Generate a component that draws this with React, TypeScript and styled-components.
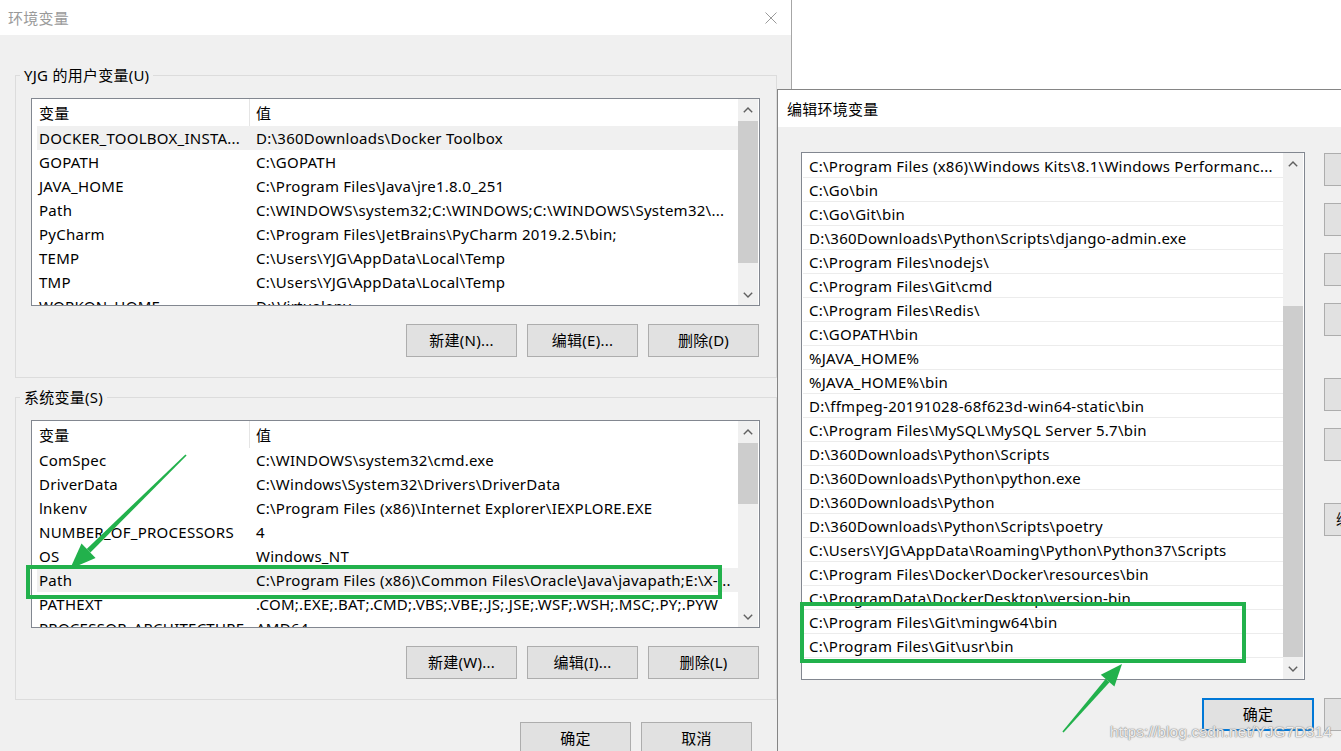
import React from 'react';
import styled, { createGlobalStyle } from 'styled-components';

const GlobalStyle = createGlobalStyle`
  html, body { margin: 0; padding: 0; background: #ffffff; }
  body { font-family: "Noto Sans", "Noto Sans CJK SC", sans-serif; }
  * { box-sizing: border-box; }
`;

const FONT = `"Noto Sans", "Noto Sans CJK SC", sans-serif`;

const Screen = styled.div`
  position: relative;
  width: 1341px;
  height: 751px;
  overflow: hidden;
  background: #ffffff;
  font-family: ${FONT};
  font-size: 15px;
  letter-spacing: 0.25px;
  color: #000;
`;

const Window = styled.section<{ $left: number; $top: number; $width: number; $height: number; $framed?: boolean }>`
  position: absolute;
  left: ${p => p.$left}px;
  top: ${p => p.$top}px;
  width: ${p => p.$width}px;
  height: ${p => p.$height}px;
  display: flex;
  flex-direction: column;
  background: #f0f0f0;
  ${p => (p.$framed ? 'border-left: 1px solid #858585; border-top: 1px solid #858585;' : 'border-right: 1px solid #a6a6a6;')}
`;

const TitleBar = styled.header<{ $height: number; $pad: number; $inactive?: boolean }>`
  height: ${p => p.$height}px;
  flex: none;
  background: #ffffff;
  display: flex;
  align-items: center;
  justify-content: space-between;
  padding: 0 14px 0 ${p => p.$pad}px;
  color: ${p => (p.$inactive ? '#9a9a9a' : '#000')};
  font-size: 15px;
`;

const CloseIcon = () => (
  <svg width="12" height="12" viewBox="0 0 12 12">
    <path d="M0.5 0.5 L11.5 11.5 M11.5 0.5 L0.5 11.5" stroke="#9a9a9a" strokeWidth="1" fill="none" />
  </svg>
);

const LeftBody = styled.div`
  flex: 1;
  padding: 40px 14px 0 15px;
  display: flex;
  flex-direction: column;
`;

const GroupBox = styled.div<{ $spaced?: boolean }>`
  position: relative;
  border: 1px solid #dcdcdc;
  padding: 22px 16px 20px 15px;
  display: flex;
  flex-direction: column;
  gap: 18px;
  margin-top: ${p => (p.$spaced ? 19 : 0)}px;
`;

const Legend = styled.span`
  position: absolute;
  top: -11px;
  left: 4px;
  padding: 0 4px;
  line-height: 20px;
  background: #f0f0f0;
  white-space: nowrap;
`;

const ListBox = styled.div<{ $height: number }>`
  height: ${p => p.$height}px;
  border: 1px solid #828790;
  background: #ffffff;
  display: flex;
  padding-right: 1px;
  overflow: hidden;
`;

const ListMain = styled.div<{ $padTop?: number }>`
  flex: 1;
  min-width: 0;
  display: flex;
  flex-direction: column;
  overflow: hidden;
  padding-top: ${p => p.$padTop ?? 0}px;
`;

const HeaderRow = styled.div`
  height: 27px;
  flex: none;
  display: flex;
  align-items: center;
`;

const HeaderCell = styled.div<{ $first?: boolean }>`
  height: 100%;
  display: flex;
  align-items: center;
  padding-left: ${p => (p.$first ? 7 : 6)}px;
  padding-bottom: 1px;
  ${p => (p.$first ? 'width: 218px; border-right: 1px solid #e5e5e5;' : 'flex: 1;')}
`;

const VarRow = styled.div<{ $selected?: boolean }>`
  height: 24px;
  flex: none;
  margin-left: 5px;
  padding-bottom: 1px;
  display: flex;
  align-items: center;
  background: ${p => (p.$selected ? '#f0f0f0' : 'transparent')};
  white-space: nowrap;
`;

const Cell = styled.div<{ $first?: boolean }>`
  padding-left: 2px;
  overflow: hidden;
  white-space: nowrap;
  ${p => (p.$first ? 'width: 217px; flex: none;' : 'flex: 1;')}
`;

const ScrollBar = styled.div`
  width: 20px;
  flex: none;
  background: #f0f0f0;
  display: flex;
  flex-direction: column;
`;

const ArrowBtn = styled.div`
  height: 21px;
  flex: none;
  display: flex;
  align-items: center;
  justify-content: center;
`;

const Track = styled.div`
  flex: 1;
  display: flex;
  flex-direction: column;
`;

const Thumb = styled.div<{ $offset: number; $size: number }>`
  margin-top: ${p => p.$offset}px;
  height: ${p => p.$size}px;
  background: #cdcdcd;
  flex: none;
`;

const Chevron = ({ down }: { down?: boolean }) => (
  <svg width="10" height="6" viewBox="0 0 10 6">
    <path
      d={down ? 'M0.8 0.8 L5 5 L9.2 0.8' : 'M0.8 5.2 L5 1 L9.2 5.2'}
      stroke="#606060"
      strokeWidth="1.4"
      fill="none"
    />
  </svg>
);

const Scroll = ({ offset, size }: { offset: number; size: number }) => (
  <ScrollBar>
    <ArrowBtn>
      <Chevron />
    </ArrowBtn>
    <Track>
      <Thumb $offset={offset} $size={size} />
    </Track>
    <ArrowBtn>
      <Chevron down />
    </ArrowBtn>
  </ScrollBar>
);

const ButtonRow = styled.div<{ $padRight?: number; $top?: number }>`
  display: flex;
  justify-content: flex-end;
  gap: 10px;
  padding-right: ${p => p.$padRight ?? 1}px;
  margin-top: ${p => p.$top ?? 0}px;
`;

const Btn = styled.button<{ $width?: number; $primary?: boolean }>`
  width: ${p => p.$width ?? 111}px;
  height: 33px;
  flex: none;
  background: #e1e1e1;
  border: ${p => (p.$primary ? '2px solid #0078d7' : '1px solid #adadad')};
  font-family: ${FONT};
  font-size: 15px;
  letter-spacing: 0.25px;
  color: #000;
  padding: 0 0 2px 0;
  white-space: nowrap;
  overflow: hidden;
`;

const RightBody = styled.div`
  flex: 1;
  padding: 25px 0 0 23px;
  display: grid;
  grid-template-columns: 504px 116px;
  grid-template-rows: 528px auto;
  column-gap: 19px;
  row-gap: 18px;
  align-content: start;
`;

const PathRow = styled.div`
  height: 24px;
  flex: none;
  margin-left: 1px;
  padding-left: 6px;
  border-bottom: 1px solid #ececec;
  display: flex;
  align-items: center;
  white-space: nowrap;
  overflow: hidden;
`;

const SideButtons = styled.div`
  display: flex;
  flex-direction: column;
  padding-top: 1px;
`;

const SideBtn = styled(Btn)<{ $gap: number }>`
  margin-top: ${p => p.$gap}px;
`;

const BottomRow = styled.div`
  grid-column: 1 / span 2;
  display: flex;
  justify-content: flex-end;
  gap: 10px;
`;

const Annotations = styled.svg`
  position: absolute;
  left: 0;
  top: 0;
  width: 1341px;
  height: 751px;
  pointer-events: none;
`;

const Watermark = styled.div`
  position: absolute;
  left: 1110px;
  top: 723px;
  font-family: "Liberation Sans", Arial, sans-serif;
  font-size: 15.5px;
  letter-spacing: 0.1px;
  color: rgba(255, 255, 255, 0.85);
  text-shadow: 0 0 1px #8a8a8a, 0 0 1px #8a8a8a, 0 0 2px #b0b0b0;
  white-space: nowrap;
`;

const userVars: [string, string][] = [
  ['DOCKER_TOOLBOX_INSTA...', 'D:\\360Downloads\\Docker Toolbox'],
  ['GOPATH', 'C:\\GOPATH'],
  ['JAVA_HOME', 'C:\\Program Files\\Java\\jre1.8.0_251'],
  ['Path', 'C:\\WINDOWS\\system32;C:\\WINDOWS;C:\\WINDOWS\\System32\\...'],
  ['PyCharm', 'C:\\Program Files\\JetBrains\\PyCharm 2019.2.5\\bin;'],
  ['TEMP', 'C:\\Users\\YJG\\AppData\\Local\\Temp'],
  ['TMP', 'C:\\Users\\YJG\\AppData\\Local\\Temp'],
  ['WORKON_HOME', 'D:\\Virtualenv'],
];

const sysVars: [string, string][] = [
  ['ComSpec', 'C:\\WINDOWS\\system32\\cmd.exe'],
  ['DriverData', 'C:\\Windows\\System32\\Drivers\\DriverData'],
  ['lnkenv', 'C:\\Program Files (x86)\\Internet Explorer\\IEXPLORE.EXE'],
  ['NUMBER_OF_PROCESSORS', '4'],
  ['OS', 'Windows_NT'],
  ['Path', 'C:\\Program Files (x86)\\Common Files\\Oracle\\Java\\javapath;E:\\X-...'],
  ['PATHEXT', '.COM;.EXE;.BAT;.CMD;.VBS;.VBE;.JS;.JSE;.WSF;.WSH;.MSC;.PY;.PYW'],
  ['PROCESSOR_ARCHITECTURE', 'AMD64'],
];

const paths = [
  'C:\\Program Files (x86)\\Windows Kits\\8.1\\Windows Performanc...',
  'C:\\Go\\bin',
  'C:\\Go\\Git\\bin',
  'D:\\360Downloads\\Python\\Scripts\\django-admin.exe',
  'C:\\Program Files\\nodejs\\',
  'C:\\Program Files\\Git\\cmd',
  'C:\\Program Files\\Redis\\',
  'C:\\GOPATH\\bin',
  '%JAVA_HOME%',
  '%JAVA_HOME%\\bin',
  'D:\\ffmpeg-20191028-68f623d-win64-static\\bin',
  'C:\\Program Files\\MySQL\\MySQL Server 5.7\\bin',
  'D:\\360Downloads\\Python\\Scripts',
  'D:\\360Downloads\\Python\\python.exe',
  'D:\\360Downloads\\Python',
  'D:\\360Downloads\\Python\\Scripts\\poetry',
  'C:\\Users\\YJG\\AppData\\Roaming\\Python\\Python37\\Scripts',
  'C:\\Program Files\\Docker\\Docker\\resources\\bin',
  'C:\\ProgramData\\DockerDesktop\\version-bin',
  'C:\\Program Files\\Git\\mingw64\\bin',
  'C:\\Program Files\\Git\\usr\\bin',
];

const sideButtons: [string, number][] = [
  ['新建(N)', 0],
  ['编辑(E)', 17],
  ['浏览(B)...', 17],
  ['删除(D)', 17],
  ['上移(U)', 42],
  ['下移(O)', 17],
  ['编辑文本(T)...', 42],
];

const VarList = ({
  rows,
  selected,
  thumbOffset,
  thumbSize,
}: {
  rows: [string, string][];
  selected: number;
  thumbOffset: number;
  thumbSize: number;
}) => (
  <ListBox $height={208}>
    <ListMain>
      <HeaderRow>
        <HeaderCell $first>变量</HeaderCell>
        <HeaderCell>值</HeaderCell>
      </HeaderRow>
      {rows.map(([k, v], i) => (
        <VarRow key={k + i} $selected={i === selected}>
          <Cell $first>{k}</Cell>
          <Cell>{v}</Cell>
        </VarRow>
      ))}
    </ListMain>
    <Scroll offset={thumbOffset} size={thumbSize} />
  </ListBox>
);

const Arrow = ({ tail, tip, len, half }: { tail: [number, number]; tip: [number, number]; len: number; half: number }) => {
  const dx = tip[0] - tail[0];
  const dy = tip[1] - tail[1];
  const d = Math.hypot(dx, dy);
  const ux = dx / d;
  const uy = dy / d;
  const px = -uy;
  const py = ux;
  const bx = tip[0] - ux * len;
  const by = tip[1] - uy * len;
  const pt = (x: number, y: number) => `${x.toFixed(1)},${y.toFixed(1)}`;
  const shaft = [
    pt(tail[0] + px * 0.8, tail[1] + py * 0.8),
    pt(bx + px * 2.6, by + py * 2.6),
    pt(bx - px * 2.6, by - py * 2.6),
    pt(tail[0] - px * 0.8, tail[1] - py * 0.8),
  ].join(' ');
  const head = [pt(tip[0], tip[1]), pt(bx + px * half, by + py * half), pt(bx - px * half, by - py * half)].join(' ');
  return (
    <g fill="#22b14c">
      <polygon points={shaft} />
      <polygon points={head} />
    </g>
  );
};

export default function App() {
  return (
    <Screen>
      <GlobalStyle />
      <Window $left={0} $top={0} $width={792} $height={751}>
        <TitleBar $height={35} $pad={8} $inactive>
          <span>环境变量</span>
          <CloseIcon />
        </TitleBar>
        <LeftBody>
          <GroupBox>
            <Legend>YJG 的用户变量(U)</Legend>
            <VarList rows={userVars} selected={0} thumbOffset={1} thumbSize={142} />
            <ButtonRow>
              <Btn>新建(N)...</Btn>
              <Btn>编辑(E)...</Btn>
              <Btn>删除(D)</Btn>
            </ButtonRow>
          </GroupBox>
          <GroupBox $spaced>
            <Legend>系统变量(S)</Legend>
            <VarList rows={sysVars} selected={5} thumbOffset={1} thumbSize={61} />
            <ButtonRow>
              <Btn>新建(W)...</Btn>
              <Btn>编辑(I)...</Btn>
              <Btn>删除(L)</Btn>
            </ButtonRow>
          </GroupBox>
          <ButtonRow $padRight={25} $top={22}>
            <Btn>确定</Btn>
            <Btn>取消</Btn>
          </ButtonRow>
        </LeftBody>
      </Window>

      <Window $left={777} $top={89} $width={620} $height={700} $framed>
        <TitleBar $height={37} $pad={9}>
          <span>编辑环境变量</span>
        </TitleBar>
        <RightBody>
          <ListBox $height={528}>
            <ListMain $padTop={1}>
              {paths.map((p, i) => (
                <PathRow key={i}>{p}</PathRow>
              ))}
            </ListMain>
            <Scroll offset={132} size={351} />
          </ListBox>
          <SideButtons>
            {sideButtons.map(([label, gap]) => (
              <SideBtn key={label} $width={116} $gap={gap}>
                {label}
              </SideBtn>
            ))}
          </SideButtons>
          <BottomRow>
            <Btn $width={112} $primary>
              确定
            </Btn>
            <Btn $width={116}>取消</Btn>
          </BottomRow>
        </RightBody>
      </Window>

      <Annotations viewBox="0 0 1341 751">
        <rect x="28" y="567" width="692" height="30" fill="none" stroke="#22b14c" strokeWidth="4" />
        <rect x="802" y="604" width="442" height="57" fill="none" stroke="#22b14c" strokeWidth="4" />
        <Arrow tail={[186, 455]} tip={[70, 569]} len={26} half={10} />
        <Arrow tail={[1063, 732]} tip={[1122, 664]} len={22} half={9} />
      </Annotations>
      <Watermark>https://blog.csdn.net/YJG7D314</Watermark>
    </Screen>
  );
}
